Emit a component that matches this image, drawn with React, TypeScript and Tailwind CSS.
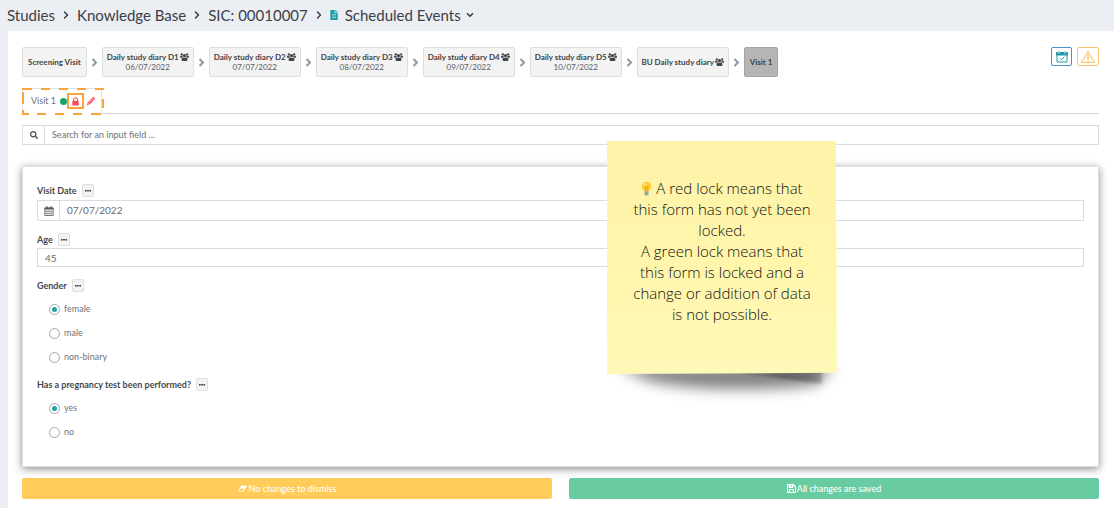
import React, { useState } from 'react';
import clsx from 'clsx';
import { FaFileAlt, FaPencilAlt, FaSearch } from 'react-icons/fa';
import { ChevronDown, ChevronRight } from 'lucide-react';

interface Step {
  label: string;
  date?: string;
  group?: boolean;
  active?: boolean;
}

const steps: Step[] = [
  { label: 'Screening Visit' },
  { label: 'Daily study diary D1', date: '06/07/2022', group: true },
  { label: 'Daily study diary D2', date: '07/07/2022', group: true },
  { label: 'Daily study diary D3', date: '08/07/2022', group: true },
  { label: 'Daily study diary D4', date: '09/07/2022', group: true },
  { label: 'Daily study diary D5', date: '10/07/2022', group: true },
  { label: 'BU Daily study diary', group: true },
  { label: 'Visit 1', active: true },
];

const crumbs = ['Studies', 'Knowledge Base', 'SIC: 00010007'];

const UsersIcon = () => (
  <svg viewBox="0 0 18 16" className="h-2 w-[9px]" fill="currentColor">
    <circle cx="3.600" cy="3" r="2.300" />
    <circle cx="14.400" cy="3" r="2.300" />
    <circle cx="9" cy="5.200" r="3.200" />
    <path d="M0 8.500C0 6.500.8 5.700 1.800 5.700c.8.500 2.200.6 3.200.2 0 1 .3 1.900.9 2.600-1.200 0-2 .5-2.700 1.200H1.500C.6 9.700 0 9.300 0 8.500zM18 8.500c0-2-.8-2.800-1.800-2.800-.8.500-2.200.6-3.200.2 0 1-.3 1.900-.9 2.600 1.200 0 2 .5 2.700 1.200h1.700c.9 0 1.500-.4 1.500-1.200z" />
    <path d="M3 13.700c0-3 1-4.900 3.100-4.900 1.700 1.200 4.100 1.200 5.800 0 2.100 0 3.100 1.900 3.100 4.900 0 1.400-.8 2.300-2.200 2.300H5.200C3.800 16 3 15.100 3 13.700z" />
  </svg>
);

const StepArrow = () => (
  <svg viewBox="0 0 7 9" className="mx-1 h-[9px] w-[7px]" fill="none" stroke="#8b9a9f" strokeWidth="2">
    <path d="M1.500 1l3.500 3.500L1.500 8" />
  </svg>
);

const LockIcon = () => (
  <svg viewBox="0 0 7 9" className="h-[9px] w-[7px]" fill="none" stroke="#fb4a59">
    <path d="M1.600 4.500V2.700a1.900 1.900 0 0 1 3.800 0v1.800" strokeWidth="1.100" />
    <rect x=".3" y="4" width="6.400" height="4.600" rx=".6" fill="#fb4a59" stroke="none" />
  </svg>
);

const CalendarIcon = () => (
  <svg viewBox="0 0 10 10" className="h-[10px] w-[10px]" fill="none" stroke="#5b6065">
    <path d="M.8 1.800h8.400v7.700H.8z" strokeWidth=".8" />
    <path d="M.5 2.600h9" strokeWidth="1.800" />
    <path d="M2.900.2v2.200M7.100.2v2.200" strokeWidth="1.300" />
    <path d="M.8 5.400h8.400M.8 7.400h8.400M2.900 3.500v6M5 3.500v6M7.100 3.500v6" strokeWidth=".5" />
  </svg>
);

const EraserIcon = () => (
  <svg viewBox="0 0 18 14" className="h-[7px] w-[9px]" fill="currentColor">
    <path
      fillRule="evenodd"
      d="M7.500 1h9c1 0 1.700.9 1.100 1.800L11 12.400c-.3.400-.7.600-1.200.6h-8c-1 0-1.700-.9-1.100-1.800L6.300 1.600C6.600 1.200 7 1 7.500 1zM9.300 11.500l3.200-4.700H5.300l-3.200 4.700z"
    />
  </svg>
);

const SaveIcon = () => (
  <svg viewBox="0 0 16 16" className="h-[9px] w-[9px]" fill="none" stroke="currentColor" strokeWidth="1.800">
    <path d="M1 1h10.500L15 4.500V15H1z" />
    <path d="M4.500 15V9.800h7V15" />
    <path d="M4 1v5h6.500V1" fill="currentColor" />
    <path d="M8.200 2v3" stroke="#69cba1" />
  </svg>
);

const Breadcrumbs: React.FC = () => (
  <nav className="flex h-[31px] items-center gap-[5px] px-[7px] pb-px text-[15px] text-[#3b4046]">
    {crumbs.map(crumb => (
      <React.Fragment key={crumb}>
        <a href="#" className="whitespace-nowrap">{crumb}</a>
        <ChevronRight className="h-3 w-3" strokeWidth={3} />
      </React.Fragment>
    ))}
    <FaFileAlt className="h-[10px] w-2 text-[#1ba3a8]" />
    <button className="ml-[2px] flex items-center gap-1">
      Scheduled Events
      <ChevronDown className="h-[10px] w-[10px]" strokeWidth={4} />
    </button>
  </nav>
);

const StepButton: React.FC<{ step: Step }> = ({ step }) => (
  <button
    className={clsx(
      'flex h-[30px] flex-col items-center justify-center rounded-xs border whitespace-nowrap text-[8px] leading-[10px]',
      step.group ? 'w-[92px]' : 'px-[5px]',
      step.active
        ? 'border-[#a5a5a5] bg-[#b5b5b5] text-[#3f4347]'
        : 'border-[#dedede] bg-[#f3f3f3] text-[#3f4347]'
    )}
  >
    <span className="flex items-center gap-px font-bold">
      {step.label}
      {step.group && <UsersIcon />}
    </span>
    {step.date && <span className="text-[#555a5f]">{step.date}</span>}
  </button>
);

const Toolbar: React.FC = () => (
  <div className="flex items-start justify-between">
    <div className="flex items-center">
      {steps.map((step, i) => (
        <React.Fragment key={step.label}>
          {i > 0 && <StepArrow />}
          <StepButton step={step} />
        </React.Fragment>
      ))}
    </div>
    <div className="flex gap-[5px]">
      <button aria-label="Calendar" className="flex h-[19px] w-[21px] items-center justify-center rounded-xs border border-[#4e90c6]">
        <svg viewBox="0 0 12 12" className="h-3 w-3" fill="none" stroke="#1f9aa5">
          <path d="M1 3.500V11h10V3.500" />
          <path d="M.5 1.500h11v2.500H.5z" fill="#1f9aa5" />
          <path d="M3 0v2.500M9 0v2.500" stroke="#fff" strokeWidth="1.600" />
          <path d="M3 0v2.500M9 0v2.500" strokeWidth=".8" />
          <path d="M4 7.200l1.500 1.500 2.800-3" />
        </svg>
      </button>
      <button aria-label="Warnings" className="flex h-[19px] w-[22px] items-center justify-center rounded-xs border border-[#fbc56d]">
        <svg viewBox="0 0 14 12" className="h-3 w-[14px]" fill="none" stroke="#f9b233" strokeLinejoin="round">
          <path d="M7 .8L13.300 11.300H.7z" strokeWidth=".9" />
          <path d="M7 4v4M7 9v1.300" strokeWidth="1.300" />
        </svg>
      </button>
    </div>
  </div>
);

const VisitTab: React.FC = () => (
  <div className="mt-[11px] flex border-b border-[#d5d8db]">
    <div className="relative -mb-px flex h-[26px] w-20 items-center border border-[#dee1e4] border-b-white pl-2 text-[9px] text-[#6c757d]">
      <button className="whitespace-nowrap">Visit 1</button>
      <span className="ml-1 h-[7px] w-[7px] shrink-0 rounded-full bg-[#12a768]" />
      <span className="flex h-4 w-[17px] shrink-0 items-center justify-center border-2 border-[#faa53b]">
        <LockIcon />
      </span>
      <FaPencilAlt className="ml-[3px] h-2 w-2 text-[#fb4a59]" />
      {/* highlight around the tab */}
      <svg
        viewBox="0 0 82 27"
        className="pointer-events-none absolute -top-px -left-px h-[27px] w-[82px]"
        fill="none"
        stroke="#faa53b"
        strokeWidth="2"
      >
        <path d="M0 1h10M19 1h9M37 1h9M55 1h9M73 1h9" />
        <path d="M0 26h7M15 26h9M33 26h9M51 26h9M69 26h10" />
        <path d="M1 4v12M1 22v5M81 11v9" />
      </svg>
    </div>
  </div>
);

const FieldLabel: React.FC<{ htmlFor?: string; id?: string; text: string }> = ({ htmlFor, id, text }) => (
  <div className="flex h-[13px] items-center gap-[5px]">
    {htmlFor ? (
      <label htmlFor={htmlFor} className="text-[9px] font-bold text-[#43484d]">{text}</label>
    ) : (
      <span id={id} className="text-[9px] font-bold text-[#43484d]">{text}</span>
    )}
    <button
      aria-label={`${text} options`}
      className="flex h-[13px] w-3 items-center justify-center rounded-xs border border-[#dedede] bg-[#f3f3f3]"
    >
      <svg viewBox="0 0 6 2" className="h-[2px] w-[6px]" fill="#33383d">
        <path d="M0 0h1.600v1.600H0zM2.200 0h1.600v1.600H2.200zM4.400 0H6v1.600H4.400z" />
      </svg>
    </button>
  </div>
);

interface RadioFieldProps {
  name: string;
  text: string;
  options: string[];
  initial: string;
}

const RadioField: React.FC<RadioFieldProps> = ({ name, text, options, initial }) => {
  const [value, setValue] = useState(initial);

  return (
    <div role="radiogroup" aria-labelledby={`${name}-label`}>
      <FieldLabel id={`${name}-label`} text={text} />
      <div className="mt-[11px] flex flex-col gap-3 pl-3">
        {options.map(option => (
          <label key={option} className="flex h-3 items-center gap-1 text-[9px] text-[#6c757d]">
            <input
              type="radio"
              name={name}
              checked={value === option}
              onChange={() => setValue(option)}
              className="h-[11px] w-[11px] appearance-none rounded-full border border-[#a3a7ab] bg-white p-[2px] bg-clip-content checked:bg-[#1ba3a8]"
            />
            {option}
          </label>
        ))}
      </div>
    </div>
  );
};

const StickyNote: React.FC = () => (
  <aside className="absolute top-[110px] left-[599px] w-[230px]">
    {/* curled shadow below the paper */}
    <svg viewBox="0 0 250 60" className="absolute -bottom-[52px] -left-[10px] h-[60px] w-[250px]">
      <defs>
        <filter id="soft" x="-20%" y="-80%" width="140%" height="300%">
          <feGaussianBlur stdDeviation="7" />
        </filter>
        <filter id="edge" x="-10%" y="-50%" width="120%" height="200%">
          <feGaussianBlur stdDeviation="1.500" />
        </filter>
        <linearGradient id="fade" x1="0" x2="1" y1="0" y2="0">
          <stop offset="0" stopColor="#000" stopOpacity="0" />
          <stop offset=".6" stopColor="#000" stopOpacity=".3" />
          <stop offset="1" stopColor="#000" stopOpacity=".2" />
        </linearGradient>
      </defs>
      <path d="M20 0H236L220 18C180 25 90 25 50 14z" fill="#000" fillOpacity=".5" filter="url(#soft)" />
      <path d="M120 0H225V18C205 16 185 11 150 9z" fill="url(#fade)" filter="url(#edge)" />
    </svg>
    <div className="relative h-[233px] bg-linear-to-b from-[#fcf3a9] via-[#fff6ab] to-[#fff9b8] px-5 pt-[37px] text-center font-['Open_Sans',sans-serif] text-[15px] leading-[21px] font-light text-[#111] [clip-path:polygon(0_0,99.5%_0,100%_99.5%,0_100%)]">
      <p>
        <svg viewBox="0 0 12 16" className="mr-1 inline-block h-[15px] w-[11px] align-[-2px]">
          <path d="M6 .5a5 5 0 0 0-5 5c0 2.200 1.600 3.100 2.400 5.500h5.200C9.400 8.600 11 7.700 11 5.500a5 5 0 0 0-5-5z" fill="#ffc928" />
          <ellipse cx="4.500" cy="3.500" rx="2" ry="1.500" fill="#ffe680" />
          <path d="M4.300 6l1 4.800M7.700 6l-1 4.800M4.300 6l1.700 1 1.700-1" stroke="#f08d1c" strokeWidth=".7" fill="none" />
          <path d="M3.800 11h4.400v3.200l-1 1.300H4.800l-1-1.300z" fill="#9aa3a8" />
        </svg>
        A red lock means that
        <br />
        this form has not yet been
        <br />
        locked.
      </p>
      <p>
        A green lock means that
        <br />
        this form is locked and a
        <br />
        change or addition of data
        <br />
        is not possible.
      </p>
    </div>
  </aside>
);

const App: React.FC = () => {
  const [date, setDate] = useState('07/07/2022');
  const [age, setAge] = useState('45');

  return (
    <div className="min-h-screen bg-[#ebeef3] font-[Lato,sans-serif]">
      <Breadcrumbs />
      <main className="relative ml-2 bg-white pt-4 pr-[15px] pb-[9px] pl-[14px]">
        <Toolbar />
        <VisitTab />

        <div className="mt-[11px] flex h-5 border border-[#d9dce3]">
          <label htmlFor="search" aria-label="Search" className="flex w-[22px] items-center justify-center border-r border-[#d9dce3]">
            <FaSearch className="h-2 w-2 text-[#43484d]" />
          </label>
          <input
            id="search"
            type="text"
            placeholder="Search for an input field ..."
            className="min-w-0 flex-1 px-[7px] text-[9px] font-medium placeholder:text-[#777c81] outline-none"
          />
        </div>

        <form className="mt-[21px] border border-[#dedede] px-[14px] pt-[17px] pb-7 shadow-[0_2px_8px_rgba(0,0,0,0.45)]">
          <FieldLabel htmlFor="visit-date" text="Visit Date" />
          <div className="mt-[3px] flex h-[21px] border border-[#d9dce3]">
            <span className="flex w-[22px] items-center justify-center border-r border-[#d9dce3]">
              <CalendarIcon />
            </span>
            <input
              id="visit-date"
              type="text"
              value={date}
              onChange={e => setDate(e.target.value)}
              className="min-w-0 flex-1 px-[7px] text-[10px] text-[#666b70] outline-none"
            />
          </div>

          <div className="mt-3">
            <FieldLabel htmlFor="age" text="Age" />
            <input
              id="age"
              type="text"
              value={age}
              onChange={e => setAge(e.target.value)}
              className="mt-[2px] block h-[19px] w-full border border-[#d9dce3] px-[7px] text-[10px] text-[#666b70] outline-none"
            />
          </div>

          <div className="mt-3 flex flex-col gap-[15px]">
            <RadioField name="gender" text="Gender" options={['female', 'male', 'non-binary']} initial="female" />
            <RadioField name="pregnancy" text="Has a pregnancy test been performed?" options={['yes', 'no']} initial="yes" />
          </div>
        </form>

        <div className="mt-[11px] grid grid-cols-2 gap-[17px] text-[9px] font-medium text-white">
          <button className="flex h-[21px] items-center justify-center gap-[2px] rounded-xs bg-[#ffcc5a]">
            <EraserIcon />
            No changes to dismiss
          </button>
          <button className="flex h-[21px] items-center justify-center gap-px rounded-xs bg-[#69cba1]">
            <SaveIcon />
            All changes are saved
          </button>
        </div>

        <StickyNote />
      </main>
    </div>
  );
};

export default App;
